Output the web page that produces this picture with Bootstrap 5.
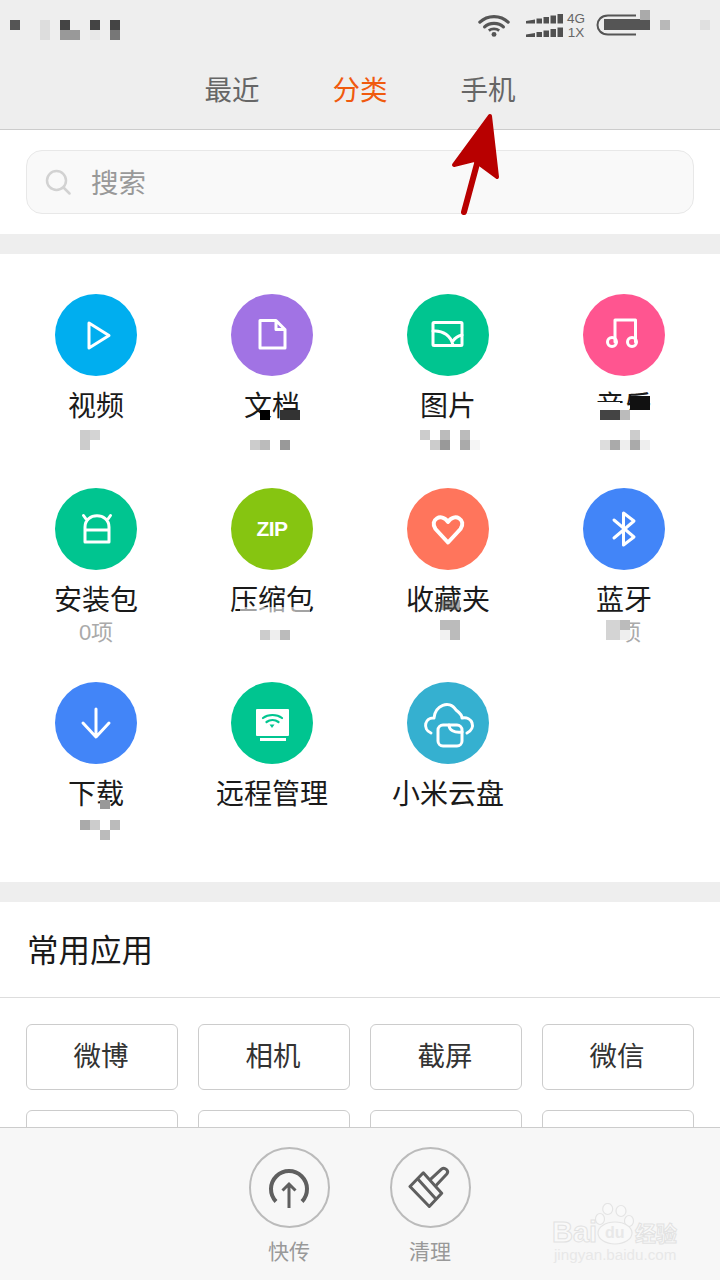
<!DOCTYPE html>
<html lang="zh">
<head>
<meta charset="utf-8">
<title>文件管理</title>
<link href="https://cdn.jsdelivr.net/npm/bootstrap@5.3.0/dist/css/bootstrap.min.css" rel="stylesheet">
<style>
body{width:720px;height:1280px;margin:0;overflow:hidden;position:relative;background:#fff;color:#1a1a1a;font-family:"Liberation Sans","Noto Sans CJK SC",sans-serif}
.hdr{height:130px;background:#eee;border-bottom:1px solid #ccc}
.stat{height:54px;padding:0 0 5px 478px}
.net{font-size:13.5px;line-height:14px;color:#666;text-align:center;width:20px;margin-left:2px;margin-top:2px}
.tabs{height:75px;gap:73px;font-size:27.5px;color:#666;padding-bottom:1px}
.tabs .on{color:#f05a0e}
.srch{height:104px;padding:20px 26px}
.sbox{height:64px;background:#f9f9f9;border:1px solid #e8e8e8;border-radius:16px;padding-left:18px;gap:20px;font-size:27.5px;color:#999}
.sword{padding-top:3px}
.band{height:20px;background:#eee}
.cats{height:628px;padding:40px 8px 0}
.cell{height:194px}
.disc{width:82px;height:82px;border-radius:50%;flex:none}
.disc svg{display:block}
.lbl{font-size:28px;line-height:36px;margin-top:13px;white-space:nowrap}
.sub{font-size:22px;line-height:24px;margin-top:2px;color:#aaa;height:24px}
.ttl{height:96px;border-bottom:1px solid #ddd;font-size:31.5px;padding-left:27px;padding-top:4px}
.quick{padding:26px 26px 0;display:grid;grid-template-columns:repeat(4,152px);gap:20px}
.qbtn{height:66px;border:1px solid #ccc;border-radius:6px;font-size:27.5px;line-height:1;color:#333;background:#fff;padding:0 2px 0 0;display:flex;align-items:center;justify-content:center}
.page{height:1127px}
.foot{height:153px;background:#f7f7f7;border-top:1px solid #ccc;padding-top:19px;gap:60px;padding-right:1px}
.act{width:81px}
.ring{width:81px;height:81px;border:2px solid #bbb;border-radius:50%}
.actl{font-size:21px;line-height:28px;color:#999;margin-top:10px}
.over{position:absolute;left:0;top:0;pointer-events:none}
.bmark{position:absolute;left:552px;top:1203px;width:130px;height:62px;color:#f9f9f9;pointer-events:none}
.bword{position:absolute;left:0;top:14px;font:bold 29px/30px "Liberation Sans",sans-serif;-webkit-text-stroke:1px #e2e2e2}
.bdu{position:absolute;left:53px;top:20px;font:bold 16px/20px "Liberation Sans",sans-serif;color:#e8e8e8}
.bcn{position:absolute;left:83px;top:16px;font:bold 21px/26px "Noto Sans CJK SC",sans-serif;-webkit-text-stroke:1px #e2e2e2}
.bsite{position:absolute;left:2px;top:44px;font:15.2px/16px "Liberation Sans",sans-serif;color:#e8e8e8;white-space:nowrap}
.bg-a{background:#00aeef}.bg-b{background:#a173e4}.bg-c{background:#00c590}.bg-d{background:#ff5590}
.bg-e{background:#86c511}.bg-f{background:#ff755c}.bg-g{background:#4285f8}.bg-h{background:#35b0d0}
.zip{font:bold 21px/82px "Liberation Sans",sans-serif;color:#fff;letter-spacing:-.6px;text-align:center}
.ico{fill:none;stroke:#fff;stroke-width:3;stroke-linejoin:round;stroke-linecap:round}
</style>
</head>
<body>
<div class="page overflow-hidden">
  <header class="hdr">
    <div class="stat d-flex align-items-center">
      <svg width="32" height="26" viewBox="0 0 34 26" class="me-3 flex-none" aria-hidden="true"><g fill="none" stroke="#555" stroke-width="3.4" stroke-linecap="round"><path d="M2 10C10 2 24 2 32 10"/><path d="M7 15C12 10 22 10 27 15"/></g><path d="M11.500 19C14.500 16.600 19.500 16.600 22.500 19" fill="none" stroke="#555" stroke-width="3"/><circle cx="17" cy="23" r="2.600" fill="#555"/></svg>
      <svg width="38" height="24" viewBox="0 0 38 24" aria-hidden="true"><g fill="#505050"><path d="M0 10.500V8L9 6.500V10.500ZM10.500 5.500H16V10.500H10.500ZM17.500 4H23V10.500H17.500ZM24.500 2.500H30V10.500H24.500ZM31.500 1H37V10.500H31.500ZM0 24V21.500L9 20V24ZM10.500 19H16V24H10.500ZM17.500 17.500H23V24H17.500ZM24.500 16H30V24H24.500ZM31.500 14.500H37V24H31.500Z"/></g></svg>
      <div class="net"><div>4G</div><div>1X</div></div>
    </div>
    <nav class="tabs d-flex justify-content-center align-items-center">
      <span>最近</span><span class="on">分类</span><span>手机</span>
    </nav>
  </header>

  <section class="srch">
    <div class="sbox d-flex align-items-center">
      <svg width="26" height="26" viewBox="0 0 26 26" aria-hidden="true"><g fill="none" stroke="#d2d2d2" stroke-width="2.500" stroke-linecap="round"><circle cx="11.500" cy="11.500" r="9.500"/><path d="M18.500 18.500l6 6"/></g></svg>
      <span class="sword">搜索</span>
    </div>
  </section>
  <div class="band"></div>

  <section class="cats">
    <div class="row g-0">
      <div class="col-3 cell d-flex flex-column align-items-center">
        <div class="disc bg-a"><svg width="82" height="82" viewBox="0 0 82 82" class="ico"><path d="M34 29V54L54 41.500Z"/></svg></div>
        <div class="lbl">视频</div><div class="sub"></div>
      </div>
      <div class="col-3 cell d-flex flex-column align-items-center">
        <div class="disc bg-b"><svg width="82" height="82" viewBox="0 0 82 82" class="ico"><path d="M29 26.500H45L54 35.500V54H29ZM45 26.500V35.500H54"/></svg></div>
        <div class="lbl">文档</div><div class="sub"></div>
      </div>
      <div class="col-3 cell d-flex flex-column align-items-center">
        <div class="disc bg-c"><svg width="82" height="82" viewBox="0 0 82 82" class="ico"><rect x="26" y="28.500" width="29" height="23" rx="1"/><path d="M26 37C36 36 44 42 46 51M46 47C48 44 51 42 55 41"/></svg></div>
        <div class="lbl">图片</div><div class="sub"></div>
      </div>
      <div class="col-3 cell d-flex flex-column align-items-center">
        <div class="disc bg-d"><svg width="82" height="82" viewBox="0 0 82 82" class="ico"><path d="M32 48V26H52.500V48"/><circle cx="29" cy="48" r="4.500"/><circle cx="49" cy="48" r="4.500"/></svg></div>
        <div class="lbl">音乐</div><div class="sub"></div>
      </div>

      <div class="col-3 cell d-flex flex-column align-items-center">
        <div class="disc bg-c"><svg width="82" height="82" viewBox="0 0 82 82" class="ico"><path d="M30 54V39C30 24 54 24 54 39V54ZM30 42H54M31 31L28.500 27.500M53 31L55.500 27.500"/></svg></div>
        <div class="lbl">安装包</div><div class="sub">0项</div>
      </div>
      <div class="col-3 cell d-flex flex-column align-items-center">
        <div class="disc bg-e zip">ZIP</div>
        <div class="lbl">压缩包</div><div class="sub"></div>
      </div>
      <div class="col-3 cell d-flex flex-column align-items-center">
        <div class="disc bg-f"><svg width="82" height="82" viewBox="0 0 82 82" class="ico"><path d="M41 54.500L28.500 41C22 32 34.500 24 41 34C47.500 24 60 32 53.500 41Z" stroke-width="4"/></svg></div>
        <div class="lbl">收藏夹</div><div class="sub"></div>
      </div>
      <div class="col-3 cell d-flex flex-column align-items-center">
        <div class="disc bg-g"><svg width="82" height="82" viewBox="0 0 82 82" class="ico"><path d="M31 32L51 49L40.500 57V25L51 33L31 50"/></svg></div>
        <div class="lbl">蓝牙</div><div class="sub text-center">0项</div>
      </div>

      <div class="col-3 cell d-flex flex-column align-items-center">
        <div class="disc bg-g"><svg width="82" height="82" viewBox="0 0 82 82" class="ico"><path d="M41 27V54M28 41L41 55L54 41"/></svg></div>
        <div class="lbl">下载</div><div class="sub"></div>
      </div>
      <div class="col-3 cell d-flex flex-column align-items-center">
        <div class="disc bg-c"><svg width="82" height="82" viewBox="0 0 82 82"><rect x="25" y="27" width="33" height="27" rx="1" fill="#fff"/><rect x="29" y="56" width="26" height="3" fill="#fff"/><g fill="none" stroke="#00c590" stroke-width="2.200" stroke-linecap="round"><path d="M32 36C37 32 46 32 51 36"/><path d="M35.500 40C39 37.500 44 37.500 47.500 40"/></g><path d="M38.500 42.500h5L41 46z" fill="#00c590"/></svg></div>
        <div class="lbl">远程管理</div><div class="sub"></div>
      </div>
      <div class="col-3 cell d-flex flex-column align-items-center">
        <div class="disc bg-h"><svg width="82" height="82" viewBox="0 0 82 82" class="ico"><path d="M24 51C15 47 18 35 27 36C28 24 42 17 49 28C53 31 55 34 55 36C65 34 70 46 60 51"/><rect x="31" y="43" width="24" height="21" rx="5"/><path d="M42 43C42 48 47 51 55 50"/></svg></div>
        <div class="lbl">小米云盘</div><div class="sub"></div>
      </div>
    </div>
  </section>
  <div class="band"></div>

  <div class="ttl d-flex align-items-center">常用应用</div>
  <div class="quick">
    <button class="btn qbtn" type="button">微博</button>
    <button class="btn qbtn" type="button">相机</button>
    <button class="btn qbtn" type="button">截屏</button>
    <button class="btn qbtn" type="button">微信</button>
    <button class="btn qbtn" type="button" aria-label="应用"></button>
    <button class="btn qbtn" type="button" aria-label="应用"></button>
    <button class="btn qbtn" type="button" aria-label="应用"></button>
    <button class="btn qbtn" type="button" aria-label="应用"></button>
  </div>
</div>

<footer class="foot d-flex justify-content-center">
  <div class="act d-flex flex-column align-items-center">
    <div class="ring d-flex align-items-center justify-content-center">
      <svg width="44" height="44" viewBox="0 0 44 44" aria-hidden="true"><g fill="none" stroke="#5f5f5f" stroke-width="4"><path d="M9 35.500A18 18 0 1 1 35 35.500"/><path d="M22 42V18M15.500 24.500L22 18L28.500 24.500" stroke-width="3"/></g></svg>
    </div>
    <div class="actl">快传</div>
  </div>
  <div class="act d-flex flex-column align-items-center">
    <div class="ring d-flex align-items-center justify-content-center">
      <svg width="44" height="44" viewBox="0 0 44 44" aria-hidden="true"><g fill="none" stroke="#5f5f5f" stroke-width="3" stroke-linejoin="round" stroke-linecap="round"><path d="M2 20.500L21.300 40.500L33.700 27.200L15.300 6.800Z"/><path d="M10.300 13.500L27.700 32.800"/><path d="M23 12.800L33.500 3.200C36.500 0.500 41.500 4.500 38.800 8L28.700 18.800"/></g></svg>
    </div>
    <div class="actl">清理</div>
  </div>
</footer>

<div class="bmark">
  <svg class="over" width="130" height="44" viewBox="0 0 130 44" aria-hidden="true"><g fill="#f9f9f9" stroke="#e4e4e4" stroke-width="1.200"><ellipse cx="55.700" cy="6" rx="5" ry="5.500"/><ellipse cx="69" cy="8" rx="5" ry="5.500"/><ellipse cx="48" cy="16" rx="4.500" ry="5.500"/><ellipse cx="77" cy="18" rx="4.500" ry="5.500"/><ellipse cx="63" cy="30" rx="17" ry="11"/></g></svg>
  <span class="bword">Bai</span>
  <span class="bdu">du</span>
  <span class="bcn">经验</span>
  <span class="bsite">jingyan.baidu.com</span>
</div>

<svg class="over" width="720" height="1280" viewBox="0 0 720 1280" aria-hidden="true">
  <!-- status bar mosaic and battery -->
  <rect x="10" y="20" width="10" height="10" fill="#555"/><rect x="40" y="20" width="10" height="20" fill="#ddd"/>
  <rect x="60" y="20" width="10" height="10" fill="#444"/><rect x="60" y="30" width="20" height="10" fill="#999"/>
  <rect x="90" y="20" width="10" height="10" fill="#444"/><rect x="90" y="30" width="10" height="10" fill="#e8e8e8"/>
  <rect x="110" y="20" width="10" height="10" fill="#444"/><rect x="110" y="30" width="10" height="10" fill="#777"/>
  <path d="M636 15.500H608C594 15.500 594 34.500 608 34.500H636" fill="none" stroke="#555" stroke-width="2"/>
  <rect x="604" y="19" width="46" height="11" fill="#555"/><rect x="640" y="10" width="10" height="10" fill="#aaa"/>
  <rect x="660" y="20" width="10" height="10" fill="#b8b8b8"/><rect x="700" y="20" width="10" height="10" fill="#e0e0e0"/>
  <!-- arrow -->
  <path d="M490 116L454 165L474 160L497 177Z" fill="#b80000" stroke="#b80000" stroke-width="4" stroke-linejoin="round"/>
  <path d="M478 160L464 212" fill="none" stroke="#b80000" stroke-width="6" stroke-linecap="round"/>
  <!-- sub-label mosaics row 1 -->
  <rect x="80" y="430" width="10" height="20" fill="#ccc"/><rect x="90" y="430" width="10" height="10" fill="#d4d4d4"/>
  <rect x="250" y="440" width="10" height="10" fill="#ccc"/><rect x="260" y="440" width="10" height="10" fill="#bbb"/><rect x="280" y="440" width="10" height="10" fill="#999"/>
  <rect x="260" y="410" width="10" height="10" fill="#000"/><rect x="280" y="410" width="20" height="10" fill="#333"/>
  <rect x="420" y="430" width="10" height="10" fill="#ccc"/><rect x="440" y="430" width="10" height="10" fill="#bbb"/><rect x="460" y="430" width="10" height="10" fill="#bbb"/>
  <rect x="430" y="440" width="10" height="10" fill="#ccc"/><rect x="440" y="440" width="10" height="10" fill="#999"/><rect x="460" y="440" width="10" height="10" fill="#aaa"/><rect x="470" y="440" width="10" height="10" fill="#f5f5f5"/>
  <rect x="596" y="402" width="24" height="18" fill="#fff"/><rect x="630" y="396" width="20" height="14" fill="#111"/><rect x="600" y="410" width="20" height="10" fill="#444"/><rect x="620" y="410" width="10" height="10" fill="#bbb"/><rect x="630" y="410" width="22" height="12" fill="#fff"/>
  <rect x="630" y="430" width="10" height="10" fill="#ccc"/><rect x="600" y="440" width="10" height="10" fill="#ddd"/><rect x="610" y="440" width="10" height="10" fill="#aaa"/><rect x="620" y="440" width="10" height="10" fill="#eee"/><rect x="630" y="440" width="10" height="10" fill="#aaa"/><rect x="640" y="440" width="10" height="10" fill="#eee"/>
  <!-- row 2 -->
  <rect x="260" y="630" width="10" height="10" fill="#ccc"/><rect x="270" y="630" width="10" height="10" fill="#eee"/><rect x="280" y="630" width="10" height="10" fill="#bbb"/>
  <rect x="440" y="620" width="20" height="10" fill="#bbb"/><rect x="450" y="630" width="10" height="10" fill="#bbb"/><rect x="440" y="630" width="10" height="10" fill="#f2f2f2"/>
  <rect x="440" y="600" width="20" height="10" fill="#555" opacity=".5"/>
  <rect x="240" y="607" width="70" height="6" fill="#fff" opacity=".6"/>
  <rect x="606" y="620" width="14" height="20" fill="#d4d4d4"/><rect x="620" y="620" width="10" height="10" fill="#bbb"/><rect x="620" y="630" width="10" height="10" fill="#eee"/>
  <!-- row 3 -->
  <rect x="100" y="800" width="10" height="9" fill="#999"/>
  <rect x="80" y="820" width="10" height="10" fill="#aaa"/><rect x="90" y="820" width="10" height="10" fill="#ccc"/><rect x="110" y="820" width="10" height="10" fill="#bbb"/><rect x="100" y="830" width="10" height="10" fill="#bbb"/>
</svg>
<script src="https://cdn.jsdelivr.net/npm/bootstrap@5.3.0/dist/js/bootstrap.bundle.min.js"></script>
</body>
</html>
